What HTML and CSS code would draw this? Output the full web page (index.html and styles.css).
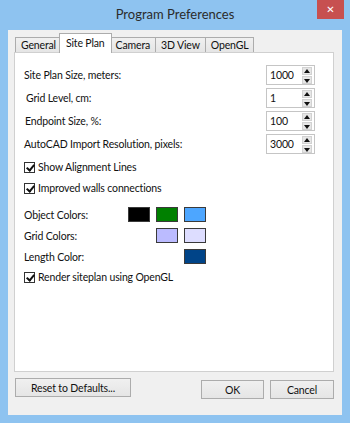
FILE: index.html
```html
<!DOCTYPE html>
<html lang="en">

<head>
    <meta charset="utf-8" />
    <title>Program Preferences</title>
    <link rel="stylesheet" href="styles.css">
</head>

<body>
    <div class="window">
        <div class="titlebar">
            <div class="title">Program Preferences</div>
            <div class="close">&#x2715;</div>
        </div>

        <div class="client">
            <div class="tabs">
                <div class="tab">General</div>
                <div class="tab active">Site Plan</div>
                <div class="tab">Camera</div>
                <div class="tab">3D View</div>
                <div class="tab">OpenGL</div>
            </div>

            <div class="panel">
                <div class="spinrow">
                    <span class="label">Site Plan Size, meters:</span>
                    <div class="spin"><span>1000</span><div class="arrows"><i class="up"></i><i class="down"></i></div></div>
                </div>
                <div class="spinrow">
                    <span class="label shift2">Grid Level, cm:</span>
                    <div class="spin"><span>1</span><div class="arrows"><i class="up"></i><i class="down"></i></div></div>
                </div>
                <div class="spinrow">
                    <span class="label shift1">Endpoint Size, %:</span>
                    <div class="spin"><span>100</span><div class="arrows"><i class="up"></i><i class="down"></i></div></div>
                </div>
                <div class="spinrow">
                    <span class="label">AutoCAD Import Resolution, pixels:</span>
                    <div class="spin"><span>3000</span><div class="arrows"><i class="up"></i><i class="down"></i></div></div>
                </div>

                <label class="check first"><span class="box"></span>Show Alignment Lines</label>
                <label class="check"><span class="box"></span>Improved walls connections</label>

                <div class="colors">
                    <div class="colorrow">
                        <span class="label">Object Colors:</span>
                        <span class="swatch black"></span>
                        <span class="swatch green"></span>
                        <span class="swatch sky"></span>
                    </div>
                    <div class="colorrow">
                        <span class="label">Grid Colors:</span>
                        <span class="swatch empty"></span>
                        <span class="swatch lilac"></span>
                        <span class="swatch pale"></span>
                    </div>
                    <div class="colorrow">
                        <span class="label">Length Color:</span>
                        <span class="swatch empty"></span>
                        <span class="swatch empty"></span>
                        <span class="swatch navy"></span>
                    </div>
                </div>

                <label class="check render"><span class="box"></span>Render siteplan using OpenGL</label>
            </div>

            <div class="footer">
                <button type="button" class="reset">Reset to Defaults...</button>
                <div class="spacer"></div>
                <button type="button" class="ok">OK</button>
                <button type="button" class="cancel">Cancel</button>
            </div>
        </div>
    </div>
</body>

</html>
```

FILE: styles.css
```css
* {
    box-sizing: border-box;
    font-family: Lato, "Liberation Sans", sans-serif;
}

body {
    margin: 0;
}

.window {
    width: 350px;
    height: 423px;
    background: #8ec3f0;
    display: flex;
    flex-direction: column;
}

.titlebar {
    height: 30px;
    display: grid;
    grid-template-columns: 1fr auto 1fr;
    align-items: start;
}

.title {
    grid-column: 2;
    font-size: 13px;
    color: #2b2b2b;
    padding-top: 6px;
}

.close {
    grid-column: 3;
    justify-self: end;
    margin-right: 6px;
    width: 27px;
    height: 19px;
    background: #c75050;
    color: #fff;
    font-family: "DejaVu Sans", sans-serif;
    font-size: 10px;
    font-weight: bold;
    text-align: center;
    line-height: 19px;
}

.client {
    flex: 1;
    margin: 0 8px 8px 8px;
    background: #f0f0f0;
    padding: 3px 8px 0 6px;
    display: flex;
    flex-direction: column;
    font-size: 10.5px;
    letter-spacing: -0.15px;
    color: #111;
}

/* tabs */
.tabs {
    display: flex;
    align-items: flex-end;
    height: 19px;
    padding-left: 1px;
}

.tab {
    height: 15px;
    border: 1px solid #acacac;
    border-bottom: none;
    margin-right: -1px;
    padding: 0 5px;
    line-height: 14px;
    background: linear-gradient(#f0f0f0, #e5e5e5);
}

.tab.active {
    height: 20px;
    margin: 0 -2px -1px -2px;
    padding: 2px 6px 0 6px;
    background: #fff;
    position: relative;
    z-index: 1;
}

.panel {
    height: 320px;
    background: #fff;
    border: 1px solid #d0d0d0;
    padding: 12px 18px 0 9px;
}

/* number rows */
.spinrow {
    display: flex;
    justify-content: space-between;
    align-items: center;
    height: 20px;
    margin-bottom: 3px;
}

.shift1 {
    padding-left: 1px;
}

.shift2 {
    padding-left: 2px;
}

.spin {
    width: 49px;
    height: 20px;
    border: 1px solid #c5c5c5;
    display: flex;
    align-items: center;
    justify-content: space-between;
    padding: 0 2px 0 3px;
}

.arrows {
    display: flex;
    flex-direction: column;
    gap: 1px;
}

.arrows i {
    display: block;
    width: 10px;
    height: 8px;
    background: #e6e6e6;
    border: 1px solid #d2d2d2;
    position: relative;
}

.arrows i::after {
    content: "";
    position: absolute;
    left: 1px;
    border-left: 3px solid transparent;
    border-right: 3px solid transparent;
}

.arrows .up::after {
    top: 1px;
    border-bottom: 4px solid #111;
}

.arrows .down::after {
    top: 2px;
    border-top: 4px solid #111;
}

/* checkboxes */
.check {
    display: flex;
    align-items: center;
    height: 14px;
    margin-bottom: 7px;
    gap: 3px;
}

.check.first {
    margin-top: 6px;
}

.box {
    width: 11px;
    height: 11px;
    border: 1px solid #333;
    background: #fff;
    position: relative;
}

.box::after {
    content: "";
    position: absolute;
    left: 3px;
    top: 0px;
    width: 3px;
    height: 6px;
    border-right: 2px solid #111;
    border-bottom: 2px solid #111;
    transform: rotate(40deg);
}

/* colour rows */
.colors {
    margin-top: 12px;
}

.colorrow {
    display: flex;
    align-items: center;
    height: 15px;
    margin-bottom: 6px;
}

.colorrow .label {
    width: 104px;
}

.swatch {
    width: 22px;
    height: 15px;
    margin-right: 6px;
    border: 1px solid #3a3a3a;
}

.swatch.empty {
    border: none;
}

.black {
    background: #000;
}

.green {
    background: #008000;
}

.sky {
    background: #4da6ff;
}

.lilac {
    background: #bbbbff;
}

.pale {
    background: #ddddff;
}

.navy {
    background: #004488;
}

/* buttons */
.footer {
    display: flex;
    align-items: flex-start;
    padding-left: 1px;
}

.spacer {
    flex: 1;
}

button {
    height: 19px;
    border: 1px solid #acacac;
    background: linear-gradient(#f0f0f0, #e5e5e5);
    font-size: 10.5px;
    letter-spacing: -0.15px;
    color: #111;
    padding: 0;
}

.reset {
    width: 116px;
    margin-top: 6px;
}

.ok {
    width: 63px;
    margin-top: 8px;
    margin-right: 6px;
}

.cancel {
    width: 64px;
    margin-top: 8px;
}
```
